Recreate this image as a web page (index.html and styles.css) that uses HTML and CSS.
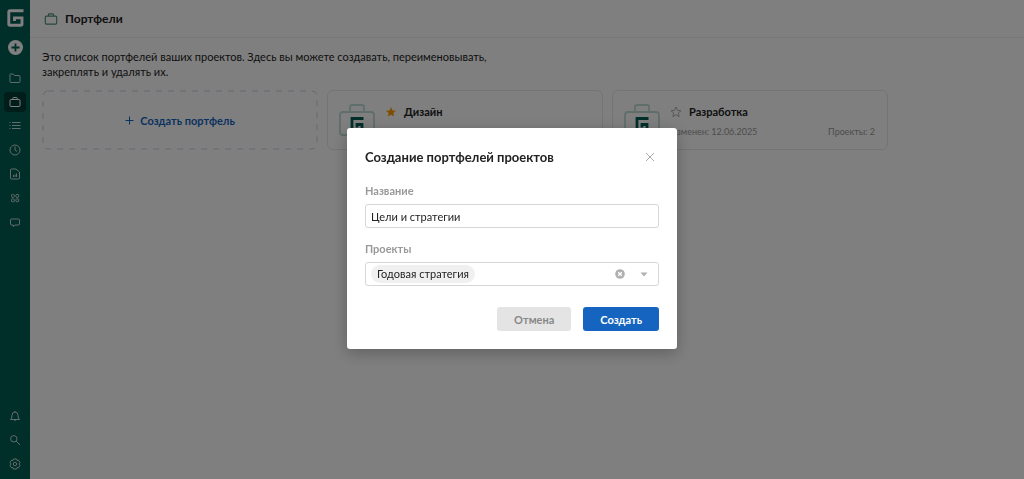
FILE: index.html
```html
<!DOCTYPE html>
<html lang="ru">
<head>
<meta charset="utf-8">
<meta name="viewport" content="width=device-width, initial-scale=1">
<title>Портфели</title>
<link rel="stylesheet" href="styles.css">
</head>
<body>
<svg class="defs" aria-hidden="true">
  <symbol id="logo" viewBox="0 0 17 18"><path d="M16.500 1.800H3Q1.800 1.800 1.800 3V15Q1.800 16.200 3 16.200H13.800Q15 16.200 15 15V8.900H7.500V12" fill="none" stroke="currentColor" stroke-width="2.900"/></symbol>
  <symbol id="case" viewBox="0 0 14 14"><path d="M3 4.500H11Q12 4.500 12 5.500V10.500Q12 11.500 11 11.500H3Q2 11.500 2 10.500V5.500Q2 4.500 3 4.500ZM4.800 4.500V3.200Q4.800 2.500 5.500 2.500H8.500Q9.200 2.500 9.200 3.200V4.500" fill="none" stroke="currentColor"/></symbol>
  <symbol id="portfolio" viewBox="0 0 36 32"><path d="M11 8V3Q11 1 13 1H23Q25 1 25 3V8M4 8H32Q35 8 35 11V28Q35 31 32 31H4Q1 31 1 28V11Q1 8 4 8Z" fill="none" stroke="#bfdcd6" stroke-width="1.800"/><path d="M24.500 14.500H13V26.500H23V20.500H18V23.500" fill="none" stroke="#005f54" stroke-width="2.800"/></symbol>
</svg>
<div class="app">
  <aside class="sidebar">
    <nav class="nav" aria-label="Основное меню">
      <a class="logo" href="#" aria-label="Главная"><svg width="17" height="18"><use href="#logo"/></svg></a>
      <button class="add" aria-label="Добавить"><svg width="15" height="15" viewBox="0 0 15 15"><circle cx="7.500" cy="7.500" r="7.500" fill="#fff"/><path d="M7.500 3.500V11.500M3.500 7.500H11.500" stroke="#005c52" stroke-width="1.800"/></svg></button>
      <a class="item" href="#" aria-label="Проекты"><svg width="14" height="14" viewBox="0 0 14 14"><path d="M2.500 3H5L6.500 4.500H11Q12 4.500 12 5.500V10.500Q12 11.500 11 11.500H3Q2 11.500 2 10.500V3.500Q2 3 2.500 3Z"/></svg></a>
      <a class="item active" href="#" aria-label="Портфели"><svg width="14" height="14"><use href="#case"/></svg></a>
      <a class="item" href="#" aria-label="Задачи"><svg width="14" height="14" viewBox="0 0 14 14"><path d="M4 3.500H12.500M4 6.500H12.500M4 9.500H12.500M1.500 3.500H2.500M1.500 6.500H2.500M1.500 9.500H2.500"/></svg></a>
      <a class="item" href="#" aria-label="Время"><svg width="14" height="14" viewBox="0 0 14 14"><circle cx="7" cy="7" r="5"/><path d="M7 3.500V7L9 8.500"/></svg></a>
      <a class="item" href="#" aria-label="Отчёты"><svg width="14" height="14" viewBox="0 0 14 14"><path d="M3.500 2H8L11.500 5V11Q11.500 12 10.500 12H3.500Q2.500 12 2.500 11V3Q2.500 2 3.500 2ZM5.500 8V10M7 7.500V10M8.500 6.500V10"/></svg></a>
      <a class="item" href="#" aria-label="Приложения"><svg width="14" height="14" viewBox="0 0 14 14"><rect x="3.500" y="3.500" width="2.800" height="2.800" rx=".7"/><rect x="7.900" y="3.500" width="2.800" height="2.800" rx=".7"/><rect x="3.500" y="7.900" width="2.800" height="2.800" rx=".7"/><rect x="7.900" y="7.900" width="2.800" height="2.800" rx=".7"/></svg></a>
      <a class="item" href="#" aria-label="Комментарии"><svg width="14" height="14" viewBox="0 0 14 14"><path d="M3.500 4H10.500Q11.500 4 11.500 5V9Q11.500 10 10.500 10H7L5.300 11.500V10H3.500Q2.500 10 2.500 9V5Q2.500 4 3.500 4Z"/></svg></a>
    </nav>
    <div class="nav">
      <a class="item" href="#" aria-label="Уведомления"><svg width="14" height="14" viewBox="0 0 14 14"><path d="M2.500 10.500Q4 9.500 4 6.500Q4 3 7 3Q10 3 10 6.500Q10 9.500 11.500 10.500ZM7 2V3M5.800 10.500Q7 13 8.200 10.500"/></svg></a>
      <a class="item" href="#" aria-label="Поиск"><svg width="14" height="14" viewBox="0 0 14 14"><circle cx="5.800" cy="5.800" r="3.200"/><path d="M8.200 8.200L12 12"/></svg></a>
      <a class="item" href="#" aria-label="Настройки"><svg width="14" height="14" viewBox="0 0 14 14"><path d="M5.500 2H8.500L9 3.500L10.500 3.200L12 5.500L11 7L12 8.500L10.500 10.800L9 10.500L8.500 12H5.500L5 10.500L3.500 10.800L2 8.500L3 7L2 5.500L3.500 3.200L5 3.500Z"/><circle cx="7" cy="7" r="1.700"/></svg></a>
    </div>
  </aside>
  <main class="main">
    <header class="header">
      <svg class="header-icon" width="16" height="16"><use href="#case"/></svg>
      <h1>Портфели</h1>
    </header>
    <section class="content">
      <p class="intro">Это список портфелей ваших проектов. Здесь вы можете создавать, переименовывать, закреплять и удалять их.</p>
      <div class="cards">
        <button class="card create">
          <svg class="dashes"><rect width="100%" height="100%" rx="5"/></svg>
          <svg width="9" height="9" viewBox="0 0 9 9"><path d="M4.500 .5V8.500M.5 4.500H8.500" stroke="currentColor"/></svg>
          <span>Создать портфель</span>
        </button>
        <article class="card">
          <svg width="36" height="32"><use href="#portfolio"/></svg>
          <div class="info">
            <div class="name"><svg width="12" height="12" viewBox="0 0 12 12"><path d="M6 1L7.500 4.400L11 4.700L8.300 7L9.200 10.600L6 8.700L2.800 10.600L3.700 7L1 4.700L4.500 4.400Z" fill="#ff9b00"/></svg><h2>Дизайн</h2></div>
            <div class="meta"><span>Изменен: 12.06.2025</span><span>Проекты: 2</span></div>
          </div>
        </article>
        <article class="card">
          <svg width="36" height="32"><use href="#portfolio"/></svg>
          <div class="info">
            <div class="name"><svg width="12" height="12" viewBox="0 0 12 12"><path d="M6 1L7.500 4.400L11 4.700L8.300 7L9.200 10.600L6 8.700L2.800 10.600L3.700 7L1 4.700L4.500 4.400Z" fill="none" stroke="#a0a0a0" stroke-width=".8"/></svg><h2>Разработка</h2></div>
            <div class="meta"><span>Изменен: 12.06.2025</span><span>Проекты: 2</span></div>
          </div>
        </article>
      </div>
    </section>
  </main>
</div>
<div class="overlay">
  <form class="modal" role="dialog" aria-modal="true" aria-labelledby="modal-title">
    <div class="modal-head">
      <h2 id="modal-title">Создание портфелей проектов</h2>
      <button class="close" type="button" aria-label="Закрыть"><svg width="10" height="10" viewBox="0 0 10 10"><path d="M1 1L9 9M9 1L1 9" stroke="#aaa"/></svg></button>
    </div>
    <label class="label" for="name">Название</label>
    <input class="field" id="name" type="text" value="Цели и стратегии">
    <label class="label" for="projects">Проекты</label>
    <div class="field select">
      <span class="chip">Годовая стратегия</span>
      <button class="clear" type="button" aria-label="Очистить"><svg width="10" height="10" viewBox="0 0 10 10"><circle cx="5" cy="5" r="4.800" fill="#b0b0b0"/><path d="M3.200 3.200L6.800 6.800M6.800 3.200L3.200 6.800" stroke="#fff" stroke-width="1.300"/></svg></button>
      <button class="toggle" id="projects" type="button" aria-haspopup="listbox"><svg width="8" height="5" viewBox="0 0 8 5"><path d="M.5 .5H7.500L4 4.500Z" fill="#b0b0b0"/></svg></button>
    </div>
    <div class="actions">
      <button class="btn" type="button">Отмена</button>
      <button class="btn primary" type="submit">Создать</button>
    </div>
  </form>
</div>
</body>
</html>
```
FILE: styles.css
```css
* { box-sizing: border-box; }
body {
  margin: 0;
  font: 11px/15px Lato, "Open Sans", sans-serif;
  color: #222;
  background: #fff;
}
h1, h2, p { margin: 0; }
button { font: inherit; border: 0; padding: 0; background: none; cursor: pointer; }
svg { display: block; flex: none; }
.defs { position: absolute; width: 0; height: 0; }

.app { display: flex; min-height: 100vh; }
.sidebar {
  width: 30px;
  flex: none;
  display: flex;
  flex-direction: column;
  justify-content: space-between;
  padding: 9px 4px 5px;
  background: #005c52;
}
.nav { display: flex; flex-direction: column; align-items: center; gap: 4px; }
.logo { color: #fff; }
.add { margin: 9px 0 9px; }
.item {
  display: flex;
  align-items: center;
  justify-content: center;
  width: 22px;
  height: 20px;
  border-radius: 4px;
  color: #c4d9d6;
}
.item svg { fill: none; stroke: currentColor; stroke-width: 1; }
.item.active { background: #003a33; color: #fff; }

.main { flex: 1; min-width: 0; }
.header {
  display: flex;
  align-items: center;
  gap: 6px;
  height: 38px;
  padding: 0 13px;
  border-bottom: 1px solid #eee;
}
.header-icon { color: #4a8f82; }
.header h1 { font-size: 12px; line-height: 18px; }
.content { padding: 11px 12px; }
.intro { max-width: 460px; }
.cards {
  display: grid;
  grid-template-columns: repeat(auto-fill, 276px);
  gap: 9px;
  margin-top: 11px;
}
.card {
  display: flex;
  gap: 10px;
  height: 60px;
  padding: 13px 12px 0 11px;
  border: 1px solid #e4e8ec;
  border-radius: 6px;
}
.create {
  position: relative;
  align-items: center;
  justify-content: center;
  gap: 6px;
  padding: 0;
  color: #1565c0;
  font-weight: 700;
  border-color: transparent;
}
.dashes { position: absolute; inset: 0; width: 100%; height: 100%; overflow: visible; }
.dashes rect { fill: none; stroke: #c4d4e6; stroke-dasharray: 6 6; }
.info { flex: 1; }
.name { display: flex; align-items: center; gap: 7px; }
.name h2 { font-size: 11px; line-height: 16px; }
.meta { display: flex; justify-content: space-between; margin-top: 4px; font-size: 9px; color: #999; }

.overlay {
  position: fixed;
  inset: 0;
  display: flex;
  align-items: center;
  justify-content: center;
  padding-bottom: 2px;
  background: rgba(0, 0, 0, .5);
}
.modal {
  width: 330px;
  padding: 18px;
  border-radius: 3px;
  background: #fff;
  box-shadow: 0 4px 16px rgba(0, 0, 0, .25);
}
.modal-head { display: flex; align-items: center; justify-content: space-between; margin-bottom: 15px; }
.modal-head h2 { font-size: 13px; line-height: 22px; }
.close { padding: 4px; }
.label { display: block; margin-bottom: 5px; line-height: 16px; font-weight: 700; color: #999; }
.field {
  display: flex;
  width: 100%;
  height: 24px;
  margin-bottom: 13px;
  padding: 0 5px;
  border: 1px solid #d6d6d6;
  border-radius: 3px;
  background: #fff;
  font: inherit;
  color: inherit;
  outline: 0;
}
.select { align-items: center; margin-bottom: 21px; }
.chip { padding: 2px 6px; border-radius: 9px; line-height: 14px; background: #f0f0f0; }
.clear { margin-left: auto; }
.toggle { margin: 0 5px 0 15px; }
.actions { display: flex; justify-content: flex-end; gap: 12px; }
.btn {
  height: 24px;
  padding: 0 17px;
  border-radius: 3px;
  background: #e4e4e4;
  color: #888;
  font-weight: 700;
}
.primary { background: #1565c0; color: #fff; }
```
